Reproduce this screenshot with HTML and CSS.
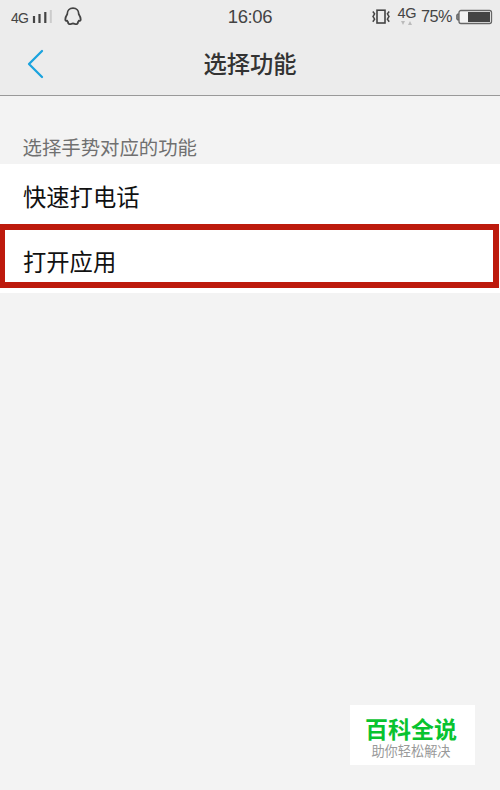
FILE: index.html
```html
<!DOCTYPE html>
<html lang="zh-CN">
<head>
    <meta charset="UTF-8">
    <meta name="viewport" content="width=device-width, initial-scale=1.0">
    <title>选择功能</title>
    <link rel="stylesheet" href="styles.css">
</head>
<body>
    <header class="header">
        <!-- Status bar -->
        <div class="status-bar">
            <div class="status-left">
                <span class="carrier">4G</span>
                <svg class="signal" width="20" height="14" viewBox="0 0 20 14">
                    <path d="M2 6v7M7.5 4v9M13.3 2v11" stroke="#444" stroke-width="2.2"/>
                    <path d="M18.8 0v13" stroke="#ccc" stroke-width="2"/>
                </svg>
                <svg class="qq" width="18" height="19" viewBox="0 0 18 19">
                    <path d="M9 1.2C5.6 1.2 3.2 3.6 3.2 7.2C2 9 1.3 10.6 1.3 12.4C1.3 13.7 2.2 14 3.2 13.7C3.4 14.4 3.6 14.8 4.2 15.3C3.8 16.6 5 17.3 6.6 17.1C7.9 17 8.5 16.5 9 16.5C9.5 16.5 10.1 17 11.4 17.1C13 17.3 14.2 16.6 13.8 15.3C14.4 14.8 14.6 14.4 14.8 13.7C15.8 14 16.7 13.7 16.7 12.4C16.7 10.6 16 9 14.8 7.2C14.8 3.6 12.4 1.2 9 1.2Z" fill="none" stroke="#444" stroke-width="1.8" stroke-linejoin="round"/>
                </svg>
            </div>
            <span class="time">16:06</span>
            <div class="status-right">
                <svg class="vibrate" width="18" height="16" viewBox="0 0 18 16" fill="none" stroke="#444">
                    <rect x="5" y="1.2" width="8" height="12.8" stroke-width="1.6"/>
                    <path d="M.8 2.5l1.8 2.3L1 7.5l1.6 2.7L.8 12.8M17.2 2.5l-1.8 2.3L17 7.5l-1.6 2.7 1.8 2.6" stroke-width="1.5"/>
                </svg>
                <div class="network">
                    <span>4G</span>
                    <svg width="11" height="4" viewBox="0 0 11 4" fill="#bbb">
                        <path d="M0 0h4L2 4zM7 4h4L9 0z"/>
                    </svg>
                </div>
                <span class="percent">75%</span>
                <svg class="battery" width="37" height="16" viewBox="0 0 37 16">
                    <path d="M3 5H1.8Q.8 5 .8 6v4q0 1 1 1H3" fill="#888" stroke="#555"/>
                    <rect x="3" y="1.5" width="32.5" height="13" rx="2" fill="#f3f3f3" stroke="#666" stroke-width="1.3"/>
                    <rect x="12" y="3" width="22" height="10" fill="#444"/>
                </svg>
            </div>
        </div>
        <!-- Title bar -->
        <div class="title-bar">
            <svg class="back" width="18" height="30" viewBox="0 0 18 30">
                <path d="M15 2L2 15l13 13" fill="none" stroke="#1ba3de" stroke-width="2.3" stroke-linecap="round" stroke-linejoin="round"/>
            </svg>
            <h1 class="title">选择功能</h1>
        </div>
    </header>

    <main>
        <p class="section-label">选择手势对应的功能</p>
        <ul class="options">
            <li class="option">快速打电话</li>
            <li class="option selected">打开应用</li>
        </ul>
    </main>

    <div class="brand">
        <strong class="brand-name">百科全说</strong>
        <span class="brand-text">助你轻松解决</span>
    </div>
</body>
</html>
```
FILE: styles.css
```css
* {
    box-sizing: border-box;
}
body {
    font-family: "Liberation Sans", "Noto Sans CJK SC", sans-serif;
    margin: 0;
    height: 790px;
    display: flex;
    flex-direction: column;
    background-color: #f3f3f3;
    overflow: hidden;
}
.header {
    height: 96px;
    background: #ececec;
    border-bottom: 1px solid #999;
}
.status-bar {
    height: 33px;
    display: grid;
    grid-template-columns: 1fr auto 1fr;
    align-items: center;
    padding: 0 7px 0 11px;
    color: #444;
}
.status-left {
    display: flex;
    align-items: center;
}
.carrier {
    font-size: 14px;
    letter-spacing: -0.8px;
    padding-top: 3px;
}
.signal {
    margin-left: 4px;
}
.qq {
    margin-left: 12px;
}
.time {
    margin-right: 4px;
    padding-top: 1px;
    font-size: 18.5px;
    letter-spacing: -0.4px;
}
.status-right {
    display: flex;
    align-items: center;
    justify-content: flex-end;
}
.network {
    display: flex;
    flex-direction: column;
    align-items: center;
    margin: -3px 5px 0 8px;
    font-size: 14.5px;
    line-height: 15px;
    letter-spacing: -0.5px;
}
.percent {
    font-size: 16.3px;
    letter-spacing: -0.5px;
}
.battery {
    margin-left: 4px;
}
.title-bar {
    height: 60px;
    display: grid;
    grid-template-columns: 1fr auto 1fr;
    align-items: center;
    padding: 0 27px;
}
.back {
    margin-top: 2px;
}
.title {
    margin: -1px 0 0;
    font-size: 23.3px;
    font-weight: 500;
    color: #333;
}
.section-label {
    margin: 0;
    height: 68px;
    padding: 37px 22.5px 0;
    font-size: 19.4px;
    line-height: 30px;
    color: #707070;
}
.options {
    list-style: none;
    margin: 0;
    padding: 0 1px 5px 0;
    background: #fff;
}
.option {
    height: 60px;
    padding: 0 23px;
    font-size: 23.3px;
    line-height: 68px;
    color: #111;
}
.selected {
    height: 64px;
    padding-left: 18px;
    border: 6px solid #bd1a0d;
    border-left-width: 5px;
    line-height: 66px;
}
.brand {
    width: 125px;
    height: 60px;
    margin: auto 25px 25px auto;
    padding: 10px 3px 0 0;
    display: flex;
    flex-direction: column;
    align-items: center;
    background: #fff;
}
.brand-name {
    font-size: 23px;
    line-height: 30px;
    font-weight: 700;
    color: #08c32f;
}
.brand-text {
    font-size: 13.2px;
    line-height: 13px;
    color: #999;
}
```
